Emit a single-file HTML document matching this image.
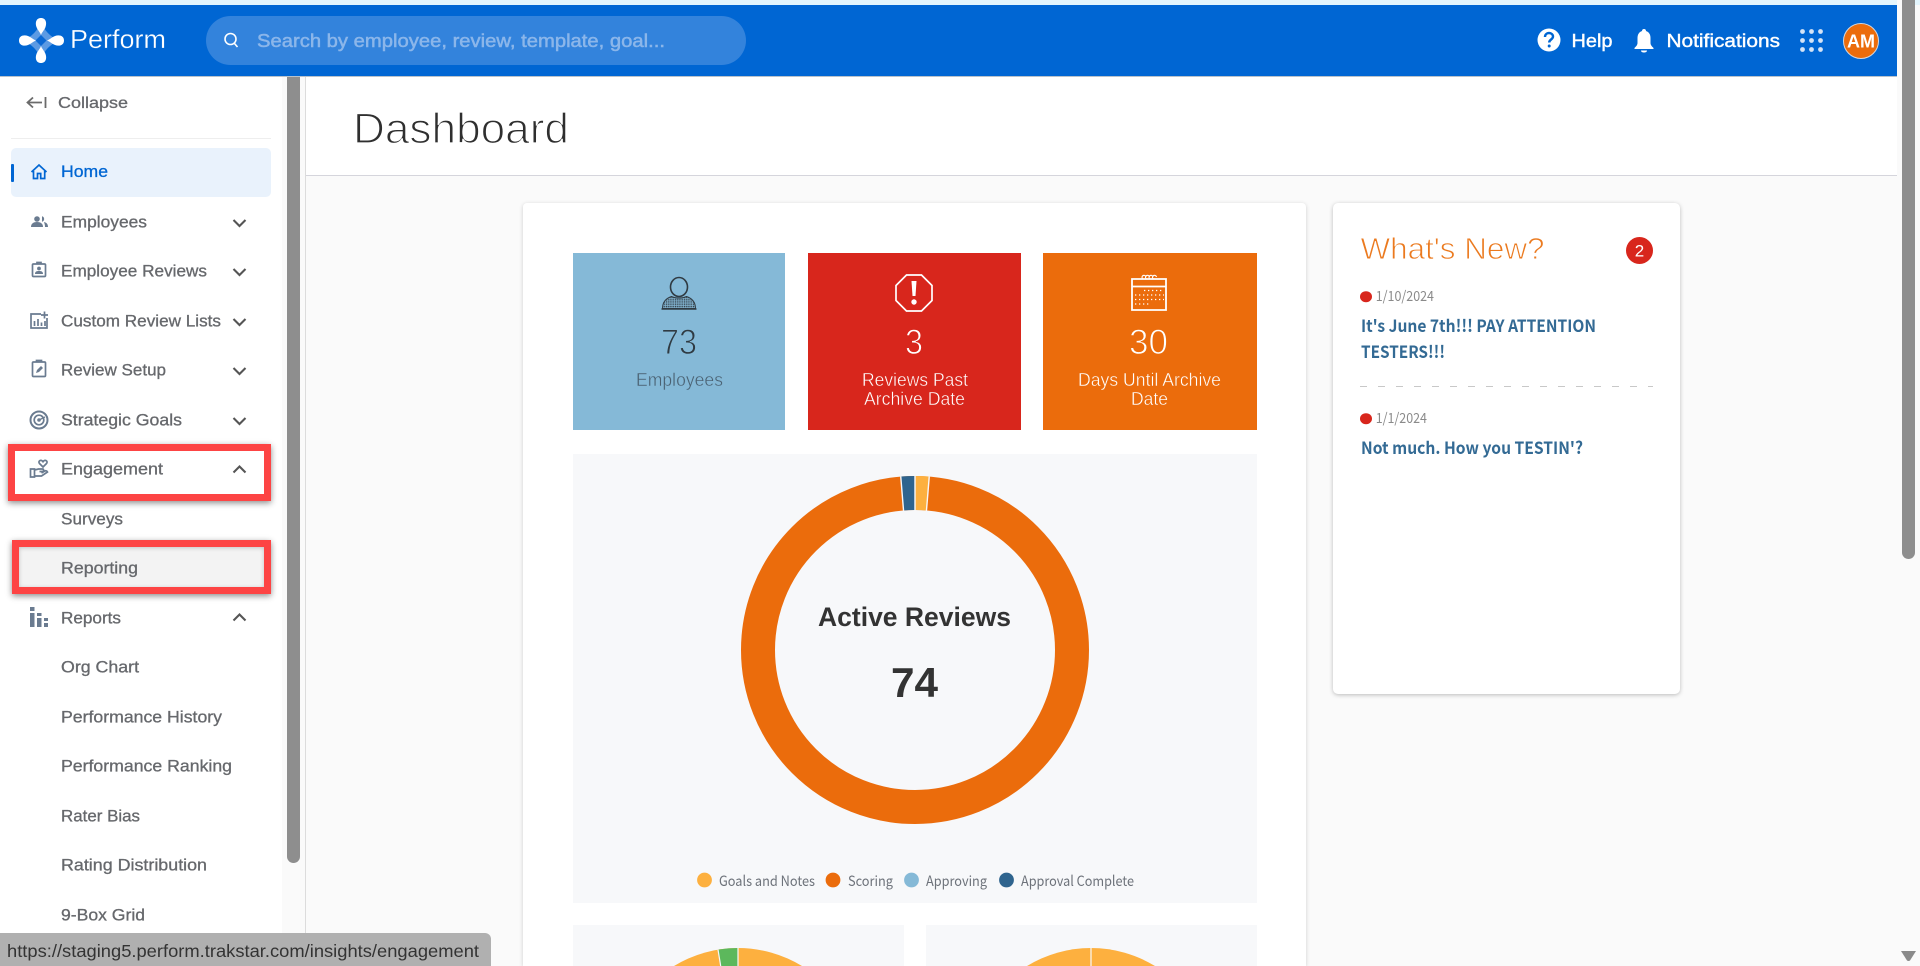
<!DOCTYPE html>
<html lang="en"><head><meta charset="utf-8"><title>Perform Dashboard</title>
<style>
html,body{margin:0;padding:0;width:1920px;height:966px;overflow:hidden;background:#fafafa;font-family:"Liberation Sans",sans-serif}
#page{position:relative;width:1920px;height:966px;overflow:hidden;background:#fafafa}
.a{position:absolute;box-sizing:border-box}
svg{position:absolute;left:0;top:0}
text{font-family:"Liberation Sans",sans-serif}
.nav{font-size:16.5px;fill:#66686c;stroke:#66686c;stroke-width:.3}
.ic{fill:none;stroke:#6a7b90;stroke-width:1.7}
.chev{fill:none;stroke:#555;stroke-width:2.1}
.src{font-family:"Noto Sans CJK JP","Liberation Sans",sans-serif}
.news{font-size:17px;font-weight:700;fill:#336a94}
.date{font-size:14px;fill:#8a8a8a}
.leg{font-size:14px;fill:#6d727a}
</style></head><body>
<div id="page">
<div class="a" style="left:0;top:0;width:1920px;height:5px;background:#e3f5fd"></div>
<div class="a" style="left:0;top:5px;width:1897px;height:71px;background:#0066d3"></div>
<div class="a" style="left:0;top:76px;width:1897px;height:1px;background:#b8c2cc"></div>
<div class="a" style="left:1897px;top:0;width:5px;height:77px;background:#fafafa"></div>
<div class="a" style="left:206px;top:16px;width:540px;height:49px;border-radius:25px;background:#3383dc"></div>
<div class="a" style="left:306px;top:77px;width:1591px;height:98px;background:#fff"></div>
<div class="a" style="left:306px;top:175px;width:1591px;height:1px;background:#d5d5dc"></div>
<div class="a" style="left:0;top:77px;width:282px;height:889px;background:#fff"></div>
<div class="a" style="left:305px;top:77px;width:1px;height:889px;background:#dcdcdc"></div>
<div class="a" style="left:11px;top:138px;width:260px;height:1px;background:#eeeeee"></div>
<div class="a" style="left:11px;top:148px;width:260px;height:49px;border-radius:5px;background:#e9f2fc"></div>
<div class="a" style="left:11px;top:164px;width:3px;height:18px;border-radius:1px;background:#0066d3"></div>
<div class="a" style="left:287px;top:77px;width:13px;height:786px;background:#8e8e8e;border-radius:0 0 7px 7px"></div>
<div class="a" style="left:1902px;top:0;width:13px;height:559px;background:#8e8e8e;border-radius:0 0 7px 7px"></div>
<div class="a" style="left:8px;top:444px;width:263px;height:57px;border:7px solid #fd4444;box-shadow:0 2px 6px rgba(0,0,0,.45)"></div>
<div class="a" style="left:12px;top:540px;width:259px;height:54px;border:7px solid #fd4444;background:#f3f3f3;box-shadow:0 2px 6px rgba(0,0,0,.45),inset 0 1px 4px rgba(0,0,0,.2)"></div>
<div class="a" style="left:523px;top:203px;width:783px;height:763px;background:#fff;border-radius:4px 4px 0 0;box-shadow:0 1px 4px rgba(0,0,0,.18)"></div>
<div class="a" style="left:1333px;top:203px;width:347px;height:491px;background:#fff;border-radius:5px;box-shadow:0 1px 4px rgba(0,0,0,.25)"></div>
<div class="a" style="left:573px;top:253px;width:212px;height:177px;background:#85b9d7"></div>
<div class="a" style="left:808px;top:253px;width:213px;height:177px;background:#d8261c"></div>
<div class="a" style="left:1043px;top:253px;width:213.500px;height:177px;background:#eb6c0c"></div>
<div class="a" style="left:573px;top:454px;width:684px;height:449px;background:#f7f8fa"></div>
<div class="a" style="left:573px;top:925px;width:331px;height:41px;background:#f7f8fa"></div>
<div class="a" style="left:926px;top:925px;width:331px;height:41px;background:#f7f8fa"></div>

<svg width="1920" height="966" viewBox="0 0 1920 966" xmlns="http://www.w3.org/2000/svg">
<defs>
<pattern id="h" width="1.800" height="1.800" patternUnits="userSpaceOnUse"><rect width="1.800" height="1.800" fill="#85b9d7"/><rect width="1.100" height="1.100" fill="#2f3a42"/></pattern>
</defs>
<!-- logo -->
<path d="M41 22 Q46 35 59 40.500 Q46 46 41 59 Q36 46 23 40.500 Q36 35 41 22Z" fill="#5c9ae3"/>
<path d="M41 35 L46.500 40.500 L41 46 L35.500 40.500Z" fill="#0a68d4"/>
<path d="M41 18C46 18 47 23 45.500 27C44.500 30 42 32 41 35C40 32 37.500 30 36.500 27C35 23 36 18 41 18Z" fill="#fff"/>
<path d="M41 63C46 63 47 58 45.500 54C44.500 51 42 49 41 46C40 49 37.500 51 36.500 54C35 58 36 63 41 63Z" fill="#fff"/>
<path d="M19 40.500C19 35.500 24 34.500 28 36C31 37 33 39.500 36 40.500C33 41.500 31 44 28 45C24 46.500 19 45.500 19 40.500Z" fill="#fff"/>
<path d="M64 40.500C64 35.500 59 34.500 55 36C52 37 50 39.500 47 40.500C50 41.500 52 44 55 45C59 46.500 64 45.500 64 40.500Z" fill="#fff"/>
<text x="70" y="48" font-size="26" fill="#fff" stroke="#0066d3" stroke-width=".3" textLength="96" lengthAdjust="spacingAndGlyphs">Perform</text>
<!-- search -->
<circle cx="230.500" cy="39" r="5.500" fill="none" stroke="#fff" stroke-width="1.600"/><path d="M234.500 43.500L237.500 47" stroke="#fff" stroke-width="1.600"/>
<text x="257" y="47" font-size="18" fill="#8bb6ea" stroke="#8bb6ea" stroke-width=".5" textLength="408" lengthAdjust="spacingAndGlyphs">Search by employee, review, template, goal...</text>
<!-- header right -->
<circle cx="1549" cy="40" r="11.500" fill="#fff"/>
<path d="M1545 37c0-2.500 1.800-4 4-4s4 1.500 4 3.500c0 3-3.800 3-3.800 6" fill="none" stroke="#0066d3" stroke-width="2.400"/><circle cx="1549.200" cy="46" r="1.500" fill="#0066d3"/>
<text x="1571.500" y="47" font-size="18" fill="#fff" stroke="#fff" stroke-width=".4" textLength="41" lengthAdjust="spacingAndGlyphs">Help</text>
<path d="M1644 29c1.500 0 2 1 2 2 3 1 4.500 3.500 4.500 7v5c0 2 1.500 3.500 3 5v1h-19v-1c1.500-1.500 3-3 3-5v-5c0-3.500 1.500-6 4.500-7 0-1 .5-2 2-2z" fill="#fff"/><path d="M1641 50.500h6c0 1.500-1.500 2-3 2s-3-.5-3-2z" fill="#fff"/>
<text x="1666.500" y="47" font-size="18" fill="#fff" stroke="#fff" stroke-width=".4" textLength="113.500" lengthAdjust="spacingAndGlyphs">Notifications</text>
<g fill="#d5e4f7"><circle cx="1802.500" cy="31.500" r="2.400"/><circle cx="1811.500" cy="31.500" r="2.400"/><circle cx="1820.500" cy="31.500" r="2.400"/><circle cx="1802.500" cy="40.500" r="2.400"/><circle cx="1811.500" cy="40.500" r="2.400"/><circle cx="1820.500" cy="40.500" r="2.400"/><circle cx="1802.500" cy="49.500" r="2.400"/><circle cx="1811.500" cy="49.500" r="2.400"/><circle cx="1820.500" cy="49.500" r="2.400"/></g>
<circle cx="1861" cy="41" r="17.500" fill="#eb6c0c" stroke="#d3d6dc" stroke-width="1"/>
<text x="1847" y="47.500" font-size="18" font-weight="700" fill="#fff" textLength="28" lengthAdjust="spacingAndGlyphs">AM</text>
<!-- scroll arrow -->
<path d="M1901 951h15l-6 9.500q-1.500 1-3 0z" fill="#8a8a8a"/>
<!-- collapse -->
<path d="M42 102.500H28M33 97.500l-5.500 5 5.500 5M45.500 97v11" fill="none" stroke="#6b6b6b" stroke-width="1.800"/>
<text x="58" y="108" class="nav" textLength="70" lengthAdjust="spacingAndGlyphs" style="font-size:16px">Collapse</text>
<!-- home -->
<path d="M31.500 172L39 165l7.500 7M33.500 171v7.500h4v-5h3.200v5h4V171" fill="none" stroke="#0066d3" stroke-width="1.700"/>
<text x="61" y="177" class="nav" style="fill:#0066d3;stroke:#0066d3" textLength="47" lengthAdjust="spacingAndGlyphs">Home</text>
<!-- nav icons -->
<g fill="#6a7b90"><circle cx="37" cy="219" r="2.800"/><path d="M31 227c0-3.500 2.500-5 6-5s6 1.500 6 5z"/><path d="M42 216.200a2.900 2.900 0 0 1 0 5.600zM44 222c2.500.5 4 2 4 5h-3c0-2-.5-3.500-1-5z"/></g>
<g class="ic"><rect x="32.500" y="264" width="13" height="12.500" rx="1"/><path d="M37 264v-1.500h4v1.500"/></g><circle cx="39" cy="268.500" r="1.900" fill="#6a7b90"/><path d="M35 274c0-2.500 1.500-3 4-3s4 .5 4 3z" fill="#6a7b90"/>
<g class="ic"><path d="M41 314H31v14h16v-10"/><path d="M44.500 311.500v7M41 315h7M34.500 326v-5M38 326v-7M41.500 326v-3.500M45 326v-5"/></g>
<g class="ic"><rect x="32.500" y="362" width="13" height="14.500" rx="1"/><path d="M36.500 362v-1.500h5v1.500"/></g><path d="M36 373l1-3 4-4 2 2-4 4z" fill="#6a7b90"/>
<g class="ic"><circle cx="39" cy="420" r="8.500" stroke-width="2"/><circle cx="39" cy="420" r="4.800"/></g><circle cx="39" cy="420" r="1.800" fill="#6a7b90"/><path d="M39 420l6-3" stroke="#6a7b90" stroke-width="1.300"/>
<g class="ic" stroke-width="1.500"><path d="M30.500 469h4v8h-4zM34.500 470l4-1h4c1.500 0 1.500 2.500 0 2.500h-3M34.500 476h7l6-4c-.5-1.500-2-1.500-3-.8l-3 1.800"/><path d="M43 467l-3.500-3.500c-2-2.500 1.800-4.500 3.500-1.800 1.700-2.700 5.500-.7 3.500 1.800z"/></g>
<g fill="#6a7b90"><rect x="30" y="607" width="4.500" height="4"/><rect x="30" y="613" width="4.500" height="14"/><rect x="37" y="613" width="4.500" height="3"/><rect x="37" y="618" width="4.500" height="9"/><rect x="44" y="618" width="4" height="3"/><rect x="44" y="623" width="4" height="4"/></g>
<!-- nav text -->
<text x="61" y="227.500" class="nav" textLength="86" lengthAdjust="spacingAndGlyphs">Employees</text>
<text x="61" y="276.500" class="nav" textLength="146" lengthAdjust="spacingAndGlyphs">Employee Reviews</text>
<text x="61" y="326.500" class="nav" textLength="160" lengthAdjust="spacingAndGlyphs">Custom Review Lists</text>
<text x="61" y="375.500" class="nav" textLength="105" lengthAdjust="spacingAndGlyphs">Review Setup</text>
<text x="61" y="425.500" class="nav" textLength="121" lengthAdjust="spacingAndGlyphs">Strategic Goals</text>
<text x="61" y="474.500" class="nav" textLength="102" lengthAdjust="spacingAndGlyphs">Engagement</text>
<text x="61" y="524.500" class="nav" textLength="62" lengthAdjust="spacingAndGlyphs">Surveys</text>
<text x="61" y="573.500" class="nav" textLength="77" lengthAdjust="spacingAndGlyphs">Reporting</text>
<text x="61" y="623.500" class="nav" textLength="60" lengthAdjust="spacingAndGlyphs">Reports</text>
<text x="61" y="672.500" class="nav" textLength="78" lengthAdjust="spacingAndGlyphs">Org Chart</text>
<text x="61" y="722.500" class="nav" textLength="161" lengthAdjust="spacingAndGlyphs">Performance History</text>
<text x="61" y="771.500" class="nav" textLength="171" lengthAdjust="spacingAndGlyphs">Performance Ranking</text>
<text x="61" y="821.500" class="nav" textLength="79" lengthAdjust="spacingAndGlyphs">Rater Bias</text>
<text x="61" y="870.500" class="nav" textLength="146" lengthAdjust="spacingAndGlyphs">Rating Distribution</text>
<text x="61" y="920.500" class="nav" textLength="84" lengthAdjust="spacingAndGlyphs">9-Box Grid</text>
<g class="chev"><path d="M233.500 220l6 6 6-6"/><path d="M233.500 269l6 6 6-6"/><path d="M233.500 319l6 6 6-6"/><path d="M233.500 368l6 6 6-6"/><path d="M233.500 418l6 6 6-6"/><path d="M233.500 472.500l6-6 6 6"/><path d="M233.500 620.500l6-6 6 6"/></g>
<!-- title -->
<text x="353" y="143" font-size="43" fill="#2f2f2f" stroke="#fff" stroke-width="1.300" textLength="216" lengthAdjust="spacingAndGlyphs">Dashboard</text>
<!-- stat icons -->
<ellipse cx="679" cy="287" rx="8.500" ry="9.500" fill="none" stroke="#2f3a42" stroke-width="1.600"/>
<path d="M662.500 308.500c0-6 3-10 9-12 4 2 11 2 15 0 6 2 9 6 9 12z" fill="url(#h)" stroke="#2f3a42" stroke-width="1"/>
<path d="M661.500 309h35" stroke="#2f3a42" stroke-width="1.600"/>
<path d="M906.500 275h15l10.500 10.500v15l-10.500 10.500h-15l-10.500-10.500v-15z" fill="none" stroke="#fff" stroke-width="1.700"/>
<path d="M911.500 281h5l-1 15h-3z" fill="#fff"/><circle cx="914" cy="302" r="2.700" fill="#fff"/>
<path d="M1132 279h34v31h-34zM1132 286.500h34" fill="none" stroke="#fff" stroke-width="1.800"/>
<path d="M1143 279a2 2 0 1 1 3-2M1146.500 279a2 2 0 1 1 3-2M1150 279a2 2 0 1 1 3-2M1153.500 279a2 2 0 1 1 3-2" fill="none" stroke="#fff" stroke-width="1.100"/>
<g stroke="#fff" stroke-width="1.300" stroke-dasharray="1.300 2.700"><path d="M1144 290.500h20M1135 295h29M1135 299.500h29M1135 304h14"/></g>
<!-- stat text -->
<text x="661" y="354" font-size="35" fill="#2f3a42" stroke="#85b9d7" stroke-width="1" textLength="36" lengthAdjust="spacingAndGlyphs">73</text>
<text x="636" y="386" font-size="18" fill="#4a6172" stroke="#85b9d7" stroke-width=".4" textLength="87" lengthAdjust="spacingAndGlyphs">Employees</text>
<text x="905" y="354" font-size="35" fill="#fff" stroke="#d8261c" stroke-width="1" textLength="18" lengthAdjust="spacingAndGlyphs">3</text>
<text x="862" y="386" font-size="18" fill="#fff" stroke="#d8261c" stroke-width=".4" textLength="106" lengthAdjust="spacingAndGlyphs">Reviews Past</text>
<text x="864" y="405" font-size="18" fill="#fff" stroke="#d8261c" stroke-width=".4" textLength="101" lengthAdjust="spacingAndGlyphs">Archive Date</text>
<text x="1129" y="354" font-size="35" fill="#fff" stroke="#eb6c0c" stroke-width="1" textLength="39" lengthAdjust="spacingAndGlyphs">30</text>
<text x="1078" y="386" font-size="18" fill="#fff" stroke="#eb6c0c" stroke-width=".4" textLength="143" lengthAdjust="spacingAndGlyphs">Days Until Archive</text>
<text x="1131" y="405" font-size="18" fill="#fff" stroke="#eb6c0c" stroke-width=".4" textLength="37" lengthAdjust="spacingAndGlyphs">Date</text>
<!-- donut -->
<circle cx="915" cy="650" r="157" fill="none" stroke="#eb6c0c" stroke-width="34"/>
<path d="M902.100 493.500A157 157 0 0 1 915 493" fill="none" stroke="#2f648e" stroke-width="34"/>
<path d="M915 493A157 157 0 0 1 927.900 493.500" fill="none" stroke="#fdb03f" stroke-width="34"/>
<path d="M903.530 510.500L900.750 476.600M915 510V476M926.470 510.500L929.250 476.600" stroke="#f7f8fa" stroke-width="1.400"/>
<text x="818" y="626" font-size="27" font-weight="700" fill="#333" textLength="193" lengthAdjust="spacingAndGlyphs">Active Reviews</text>
<text x="891" y="697" font-size="42" font-weight="700" fill="#333" textLength="47" lengthAdjust="spacingAndGlyphs">74</text>
<!-- legend -->
<circle cx="704.500" cy="880" r="7.400" fill="#fdb03f"/><text x="719" y="886" class="leg src" textLength="96" lengthAdjust="spacingAndGlyphs">Goals and Notes</text>
<circle cx="833" cy="880" r="7.400" fill="#eb6c0c"/><text x="848" y="886" class="leg src" textLength="45" lengthAdjust="spacingAndGlyphs">Scoring</text>
<circle cx="911.500" cy="880" r="7.400" fill="#85b9d7"/><text x="926" y="886" class="leg src" textLength="61" lengthAdjust="spacingAndGlyphs">Approving</text>
<circle cx="1006.500" cy="880" r="7.400" fill="#2f648e"/><text x="1021" y="886" class="leg src" textLength="113" lengthAdjust="spacingAndGlyphs">Approval Complete</text>
<!-- pies, cut at the viewport edge -->
<path d="M674 966A123 123 0 0 1 802 966Z" fill="#fdb03f"/>
<path d="M720.700 966L718 949.600A123 123 0 0 1 738 948V966Z" fill="#5cb85c"/>
<path d="M738 966V948M720.700 966L718 949.600" stroke="#f7f8fa" stroke-width="1.200"/>
<path d="M1027 966A123 123 0 0 1 1155 966Z" fill="#fdb03f"/>
<path d="M1091 966V948" stroke="#f7f8fa" stroke-width="1.200"/>
<!-- what's new -->
<text x="1360.500" y="259" font-size="31" fill="#eb7a1f" stroke="#fff" stroke-width=".9" textLength="184" lengthAdjust="spacingAndGlyphs">What's New?</text>
<circle cx="1639.500" cy="250.500" r="13.500" fill="#d8261c"/>
<text x="1639.500" y="256.500" font-size="17" fill="#fff" text-anchor="middle">2</text>
<ellipse cx="1366" cy="296.700" rx="6" ry="5.500" fill="#d8261c"/>
<text x="1375.700" y="301" class="date src" textLength="58.300" lengthAdjust="spacingAndGlyphs">1/10/2024</text>
<text x="1361" y="332" class="news src" textLength="235" lengthAdjust="spacingAndGlyphs">It's June 7th!!! PAY ATTENTION</text>
<text x="1361" y="358" class="news src" textLength="84" lengthAdjust="spacingAndGlyphs">TESTERS!!!</text>
<path d="M1360 386.500H1653" stroke="#c8c8c8" stroke-width="1" stroke-dasharray="7 11"/>
<ellipse cx="1366" cy="418.700" rx="6" ry="5.500" fill="#d8261c"/>
<text x="1375.700" y="423" class="date src" textLength="51.300" lengthAdjust="spacingAndGlyphs">1/1/2024</text>
<text x="1361" y="454" class="news src" textLength="222" lengthAdjust="spacingAndGlyphs">Not much. How you TESTIN'?</text>
</svg>
<div class="a" style="left:0;top:933px;width:491px;height:33px;background:#b0b0b0;border-radius:0 6px 0 0"></div>
<svg width="1920" height="966" viewBox="0 0 1920 966" xmlns="http://www.w3.org/2000/svg"><text x="7" y="957" font-size="17.500" fill="#333" textLength="472" lengthAdjust="spacingAndGlyphs">https://staging5.perform.trakstar.com/insights/engagement</text></svg>
</div>
</body></html>
